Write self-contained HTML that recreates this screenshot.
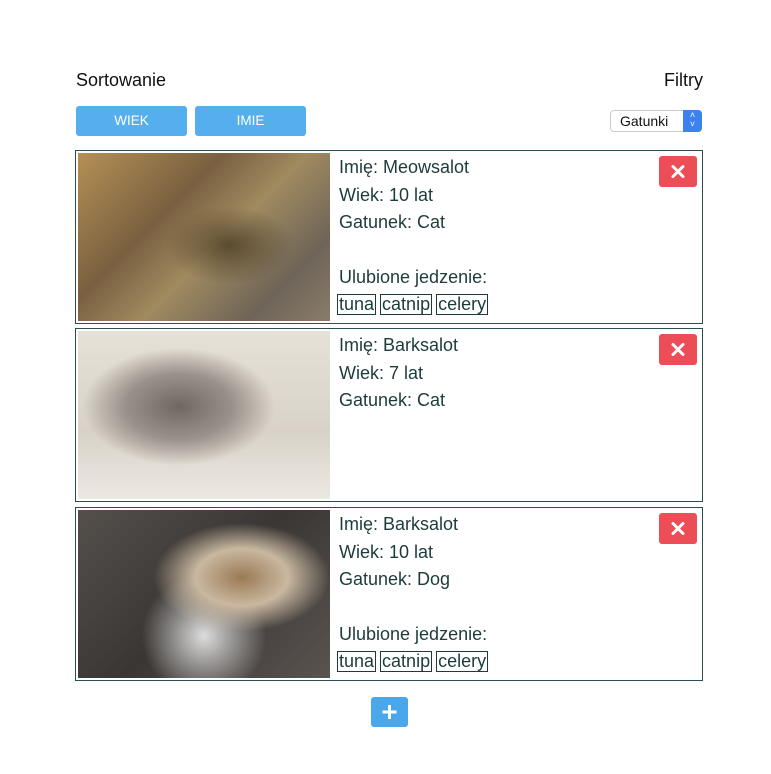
<!DOCTYPE html><html><head><style>
body{margin:0;width:771px;height:774px;background:#fff;font-family:"Liberation Sans",sans-serif;position:relative;overflow:hidden}
.a{position:absolute}
.btn{position:absolute;top:106px;height:30px;width:111px;background:#55aeee;border-radius:3px;color:#fff;font-size:13.5px;line-height:30px;text-align:center}
.card{position:absolute;left:75px;width:626px;border:1px solid #2b4f4f}
.img{position:absolute;left:2px;top:2px;width:252px}
.t{position:absolute;left:263px;color:#1e3b3b;font-size:18px}
.del{position:absolute;left:583px;top:5px;width:38px;height:31px;background:#ec4d57;border-radius:3px}
.tag{display:inline-block;border:1px solid #1e3b3b;padding:0 1px;line-height:19px;margin-right:4px}
</style></head><body>
<div class="a" style="left:76px;top:70px;font-size:18px;color:#111">Sortowanie</div>
<div class="a" style="left:664px;top:70px;font-size:18px;color:#111">Filtry</div>
<div class="btn" style="left:76px">WIEK</div>
<div class="btn" style="left:195px">IMIE</div>
<div class="a" style="left:610px;top:110px;width:92px;height:22px;border:1px solid #ccc;border-radius:4px;box-sizing:border-box;font-size:14px;line-height:20px;padding-left:9px;color:#111">Gatunki<div class="a" style="right:-1px;top:-1px;width:19px;height:22px;background:#3b82f0;border-radius:0 4px 4px 0;color:#fff;font-size:9px;line-height:9px;text-align:center;padding-top:1px;box-sizing:border-box">˄<br>˅</div></div>

<div class="card" style="top:150px;height:172px">
<div class="img" style="height:168px;background:radial-gradient(ellipse at 60% 55%,#5a4a30 0,transparent 30%),linear-gradient(135deg,#b59055 0%,#7a6040 35%,#a08a60 55%,#6e6458 80%,#8a7c6a 100%)"></div>
<div class="t" style="top:6px">Imię: Meowsalot</div>
<div class="t" style="top:34px">Wiek: 10 lat</div>
<div class="t" style="top:61px">Gatunek: Cat</div>
<div class="t" style="top:116px">Ulubione jedzenie:</div>
<div class="t" style="top:143px;left:261px"><span class="tag">tuna</span><span class="tag">catnip</span><span class="tag">celery</span></div>
<div class="del"><svg width="38" height="31"><path d="M14 10.5L24 20.5M24 10.5L14 20.5" stroke="#fff" stroke-width="3" stroke-linecap="round"/></svg></div>
</div>

<div class="card" style="top:328px;height:172px">
<div class="img" style="height:168px;background:radial-gradient(ellipse at 40% 45%,#6f6860 0,#9a918a 25%,transparent 45%),linear-gradient(180deg,#e6e1d8 0%,#d8d2c8 60%,#ece8e2 100%)"></div>
<div class="t" style="top:6px">Imię: Barksalot</div>
<div class="t" style="top:34px">Wiek: 7 lat</div>
<div class="t" style="top:61px">Gatunek: Cat</div>
<div class="del"><svg width="38" height="31"><path d="M14 10.5L24 20.5M24 10.5L14 20.5" stroke="#fff" stroke-width="3" stroke-linecap="round"/></svg></div>
</div>

<div class="card" style="top:507px;height:172px">
<div class="img" style="height:168px;background:radial-gradient(ellipse at 65% 40%,#9a7a55 0,#c9b8a0 20%,transparent 38%),radial-gradient(ellipse at 50% 75%,#ddd 0,transparent 35%),linear-gradient(135deg,#55504c 0%,#3a3634 50%,#5a5450 100%)"></div>
<div class="t" style="top:6px">Imię: Barksalot</div>
<div class="t" style="top:34px">Wiek: 10 lat</div>
<div class="t" style="top:61px">Gatunek: Dog</div>
<div class="t" style="top:116px">Ulubione jedzenie:</div>
<div class="t" style="top:143px;left:261px"><span class="tag">tuna</span><span class="tag">catnip</span><span class="tag">celery</span></div>
<div class="del"><svg width="38" height="31"><path d="M14 10.5L24 20.5M24 10.5L14 20.5" stroke="#fff" stroke-width="3" stroke-linecap="round"/></svg></div>
</div>

<div class="a" style="left:371px;top:697px;width:37px;height:30px;background:#4aa8ea;border-radius:3px"><svg width="37" height="30"><path d="M18.5 8V22M11.5 15H25.5" stroke="#fff" stroke-width="3"/></svg></div>
</body></html>
